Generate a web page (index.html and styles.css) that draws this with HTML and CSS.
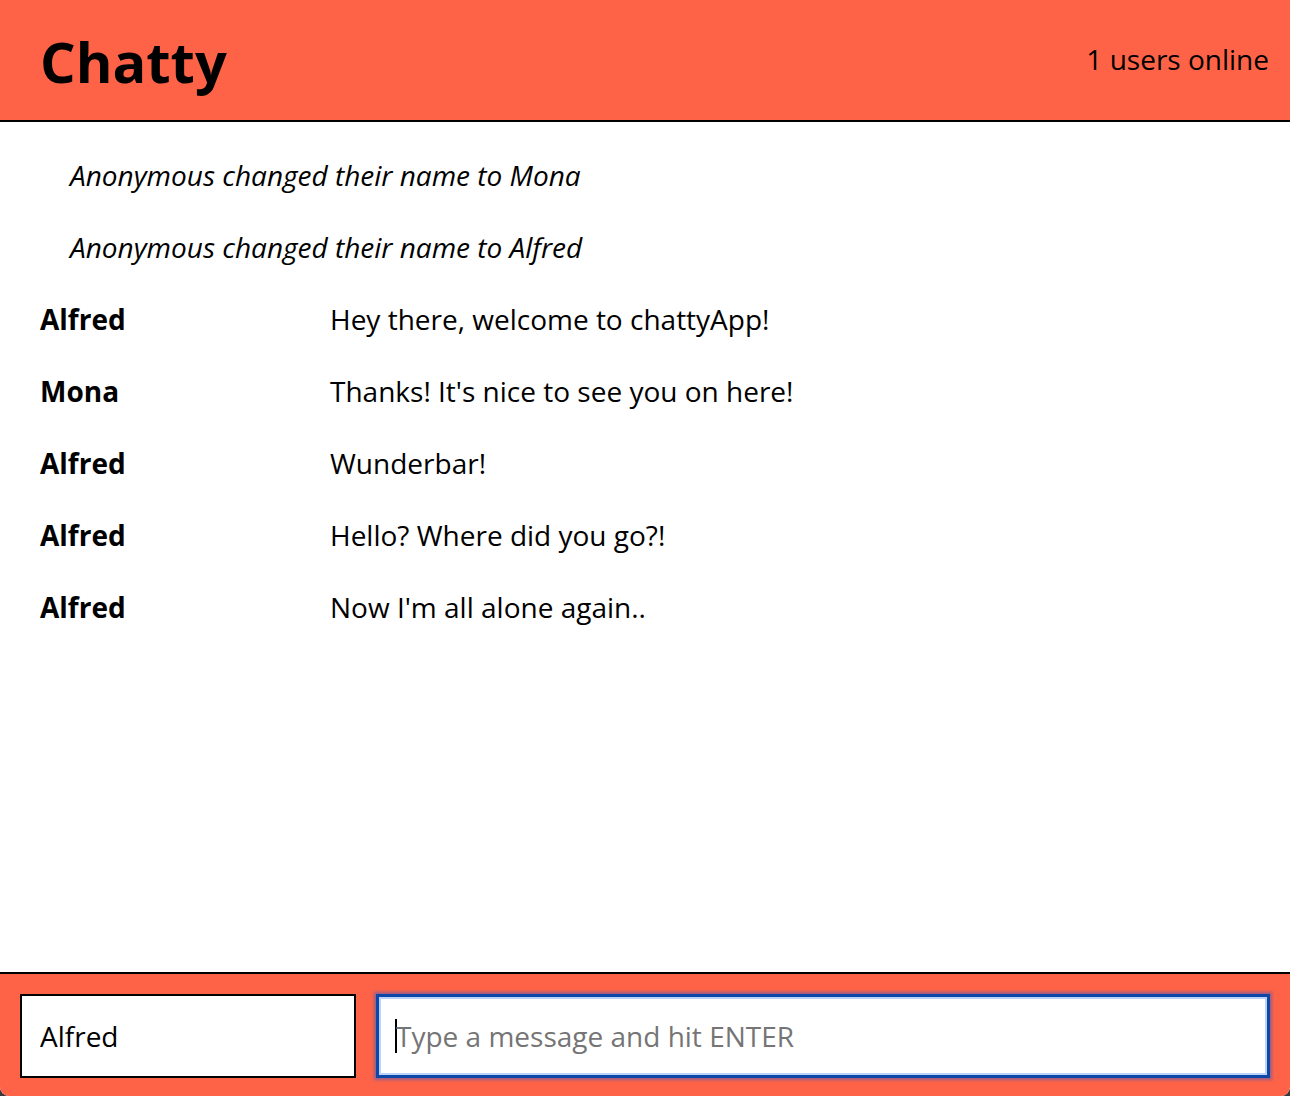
FILE: index.html
```html
<!DOCTYPE html>
<html lang="en">
<head>
<meta charset="utf-8">
<title>Chatty</title>
<link rel="stylesheet" href="styles.css">
</head>
<body>
<div class="app">
  <nav class="navbar">
    <a class="navbar-brand" href="#">Chatty</a>
    <span class="online">1 users online</span>
  </nav>
  <main class="messages">
    <div class="message system">Anonymous changed their name to Mona</div>
    <div class="message system">Anonymous changed their name to Alfred</div>
    <div class="message"><span class="username">Alfred</span><span class="content">Hey there, welcome to chattyApp!</span></div>
    <div class="message"><span class="username">Mona</span><span class="content">Thanks! It's nice to see you on here!</span></div>
    <div class="message"><span class="username">Alfred</span><span class="content">Wunderbar!</span></div>
    <div class="message"><span class="username">Alfred</span><span class="content">Hello? Where did you go?!</span></div>
    <div class="message"><span class="username">Alfred</span><span class="content">Now I'm all alone again..</span></div>
  </main>
  <footer class="chatbar">
    <input class="chatbar-username" type="text" value="Alfred">
    <div class="chatbar-message"><span class="caret"></span><span class="placeholder">Type a message and hit ENTER</span></div>
  </footer>
</div>
</body>
</html>
```

FILE: styles.css
```css
html {
  background: #3a3a3a;
  height: 100%;
}
body {
  margin: 0;
  height: 100%;
  font-family: "Open Sans", "DejaVu Sans", sans-serif;
  color: #000;
}
.app {
  height: 100%;
  display: flex;
  flex-direction: column;
  background: #fff;
  border-radius: 0 0 9px 9px;
  overflow: hidden;
}
.navbar {
  flex: 0 0 auto;
  height: 120px;
  background: #ff6347;
  border-bottom: 2px solid #000;
  display: flex;
  align-items: center;
  justify-content: space-between;
  padding: 0 21px 0 40px;
}
.navbar-brand {
  font-size: 56px;
  font-weight: 700;
  color: #000;
  text-decoration: none;
  line-height: 1;
  margin-top: 2px;
}
.online {
  font-size: 28px;
  line-height: 1;
  margin-bottom: 2px;
}
.messages {
  flex: 1 1 auto;
  padding: 17px 40px 0 40px;
}
.message {
  display: flex;
  align-items: center;
  height: 72px;
  font-size: 28px;
}
.message.system {
  font-style: italic;
  padding-left: 30px;
}
.username {
  width: 290px;
  flex: 0 0 290px;
  font-weight: 700;
}
.content {
  flex: 1;
}
.chatbar {
  flex: 0 0 auto;
  background: #ff6347;
  border-top: 2px solid #000;
  display: flex;
  gap: 20px;
  padding: 20px 20px 18px 20px;
}
.chatbar-username {
  box-sizing: border-box;
  width: 336px;
  height: 84px;
  border: 2px solid #000;
  padding: 0 18px;
  font-family: "Open Sans", "DejaVu Sans", sans-serif;
  font-size: 28px;
  color: #000;
  background: #fff;
  outline: none;
  margin: 0;
}
.chatbar-message {
  box-sizing: border-box;
  flex: 1;
  height: 84px;
  border: 3px solid #0d48a8;
  box-shadow: inset 0 0 0 2px #b9d4f7, 0 0 3px 2px rgba(70, 90, 190, 0.55);
  background: #fff;
  display: flex;
  align-items: center;
  padding-left: 16px;
  font-size: 28px;
}
.caret {
  width: 2px;
  height: 34px;
  background: #000;
  margin-right: -1px;
}
.placeholder {
  color: #757575;
}
```
